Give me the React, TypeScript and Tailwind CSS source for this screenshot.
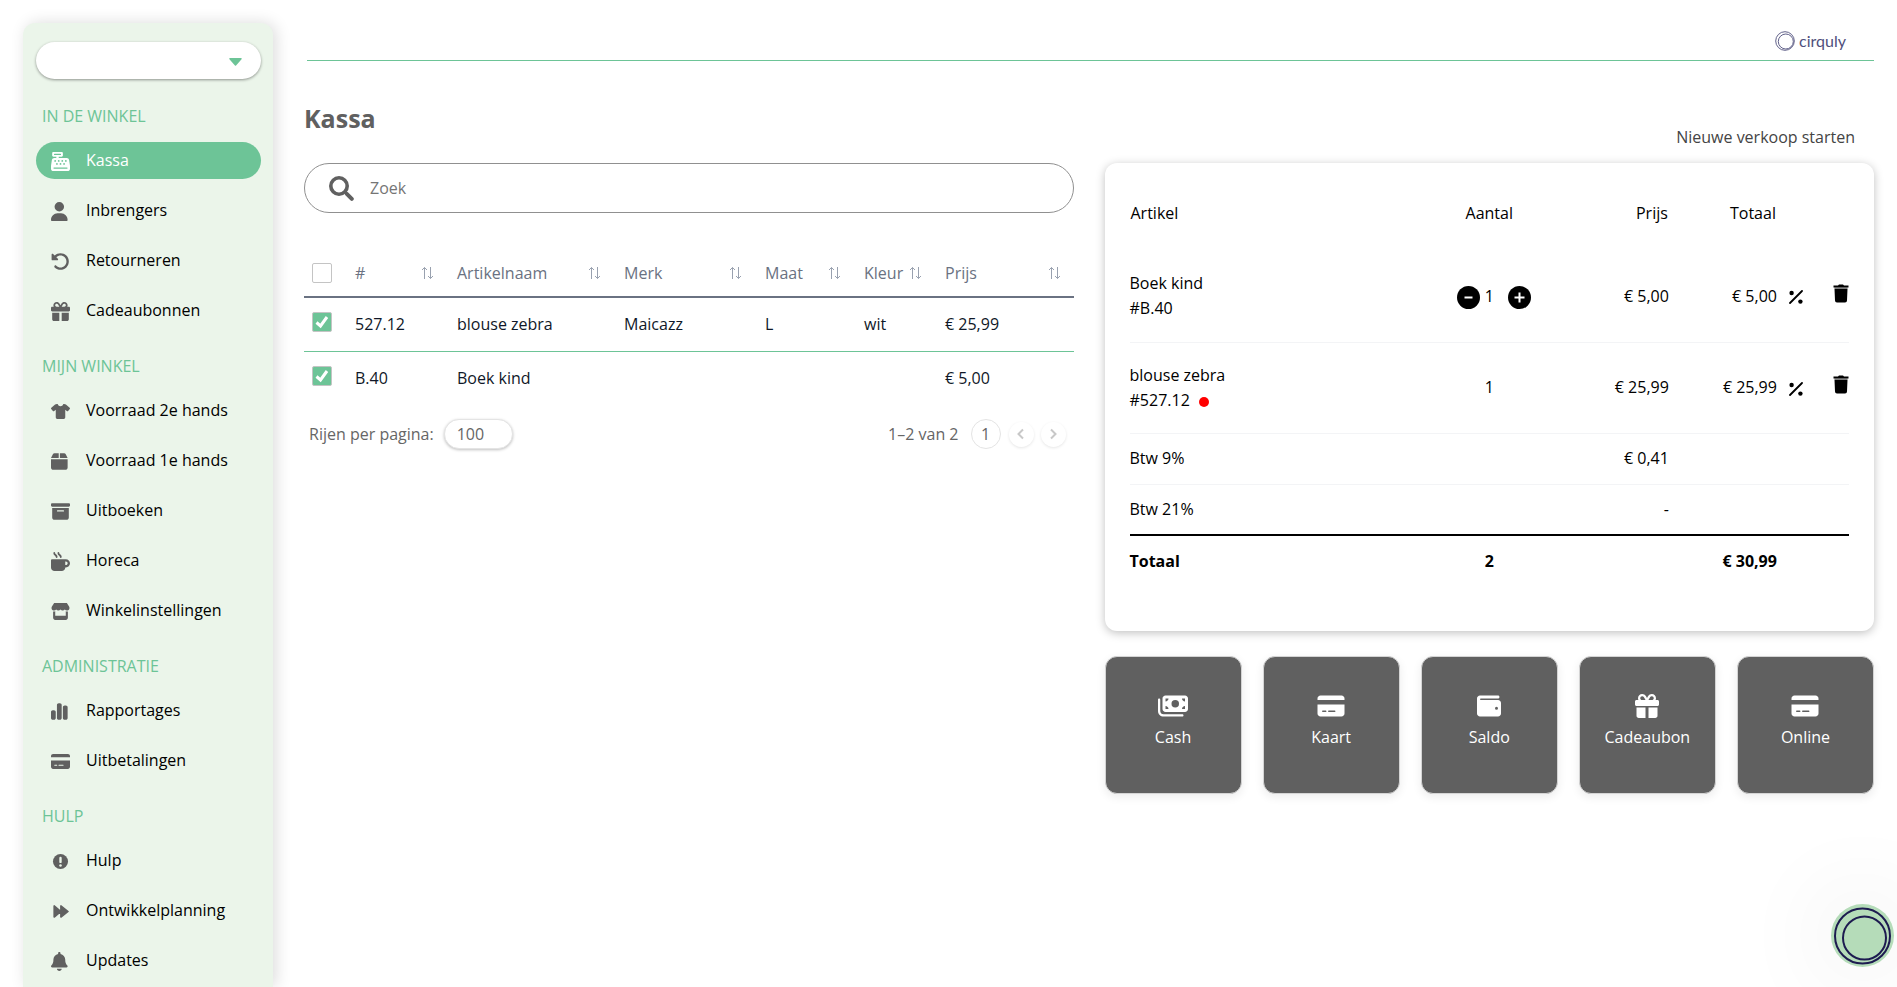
import { useState } from 'react';
import type { ReactNode } from 'react';
import type { IconType } from 'react-icons';
import {
    FaBell,
    FaBox,
    FaBoxArchive,
    FaCashRegister,
    FaChartSimple,
    FaCreditCard,
    FaGift,
    FaMoneyBills,
    FaMugHot,
    FaRotateLeft,
    FaShirt,
    FaStore,
    FaUser,
    FaWallet
} from 'react-icons/fa6';

interface IconProps {
    className?: string;
}

interface MenuItem {
    label: string;
    icon: IconType | ((props: IconProps) => ReactNode);
}

interface Article {
    id: string;
    name: string;
    brand: string;
    size: string;
    color: string;
    price: string;
}

interface CartLine {
    id: string;
    name: string;
    price: string;
    unique: boolean;
}

function NoticeIcon({ className }: IconProps) {
    return (
        <svg viewBox="0 0 24 24" className={className} aria-hidden="true">
            <circle cx="12" cy="12" r="9.5" fill="currentColor" />
            <path d="M12 7.500v5" stroke="#ebf5ea" strokeWidth="3" strokeLinecap="round" />
            <circle cx="12" cy="17" r="1.6" fill="#ebf5ea" />
        </svg>
    );
}

function ForwardIcon({ className }: IconProps) {
    return (
        <svg viewBox="0 0 24 24" className={className} aria-hidden="true">
            <path
                d="M4 5v14l8.500-7v7l9-7-9-7v7z"
                fill="currentColor"
                stroke="currentColor"
                strokeWidth="2"
                strokeLinejoin="round"
            />
        </svg>
    );
}

function SearchIcon({ className }: IconProps) {
    return (
        <svg viewBox="0 0 25 25" className={className} fill="none" stroke="currentColor" aria-hidden="true">
            <circle cx="10" cy="10" r="8.2" strokeWidth="3.6" />
            <path d="M16 16l2 2" strokeWidth="2.4" />
            <path d="M17.8 17.8l5 5" strokeWidth="4" strokeLinecap="round" />
        </svg>
    );
}

function SortIcon() {
    return (
        <svg viewBox="0 0 13 14" className="h-[14px] w-[13px] text-gray-400" fill="none" stroke="currentColor" aria-hidden="true">
            <path d="M3.5 13V1.5M1 4l2.5-2.5L6 4M9.5 1v11.5M7 10l2.500 2.500L12 10" />
        </svg>
    );
}

function PercentIcon() {
    return (
        <svg viewBox="0 0 14 14" className="h-[14px] w-[14px]" fill="currentColor" aria-hidden="true">
            <path d="M1 13L13 1" stroke="currentColor" strokeWidth="1.8" strokeLinecap="round" />
            <circle cx="2.600" cy="3" r="2.200" />
            <circle cx="11.400" cy="11.600" r="2.200" />
        </svg>
    );
}

function TrashIcon() {
    return (
        <svg viewBox="0 0 16 19" className="h-[19px] w-[16px]" fill="currentColor" aria-hidden="true">
            <path d="M.5 1.500h4.500L6 .5h4l1 1h4.500v2H.5z" />
            <path d="M1.500 3.500h13v1.200h-13z" opacity=".5" />
            <path d="M1.500 4.700h13L14 16.500a2 2 0 0 1-2 2H4a2 2 0 0 1-2-2z" />
        </svg>
    );
}

function RoundIcon({ plus = false }: { plus?: boolean }) {
    return (
        <svg viewBox="0 0 23 23" className="h-[23px] w-[23px]" aria-hidden="true">
            <circle cx="11.5" cy="11.5" r="11.5" />
            <path d={plus ? 'M6.500 11.500h10M11.500 6.500v10' : 'M7.500 11.500h8'} stroke="#fff" strokeWidth="2" />
        </svg>
    );
}

function ChevronIcon({ right = false }: { right?: boolean }) {
    return (
        <svg viewBox="0 0 10 12" className="h-[12px] w-[10px]" fill="none" stroke="currentColor" strokeWidth="2" aria-hidden="true">
            <path d={right ? 'M3 1.500L7.500 6 3 10.500' : 'M7 1.500L2.500 6 7 10.500'} />
        </svg>
    );
}

const menu: { title: string; items: MenuItem[] }[] = [
    {
        title: 'IN DE WINKEL',
        items: [
            { label: 'Kassa', icon: FaCashRegister },
            { label: 'Inbrengers', icon: FaUser },
            { label: 'Retourneren', icon: FaRotateLeft },
            { label: 'Cadeaubonnen', icon: FaGift }
        ]
    },
    {
        title: 'MIJN WINKEL',
        items: [
            { label: 'Voorraad 2e hands', icon: FaShirt },
            { label: 'Voorraad 1e hands', icon: FaBox },
            { label: 'Uitboeken', icon: FaBoxArchive },
            { label: 'Horeca', icon: FaMugHot },
            { label: 'Winkelinstellingen', icon: FaStore }
        ]
    },
    {
        title: 'ADMINISTRATIE',
        items: [
            { label: 'Rapportages', icon: FaChartSimple },
            { label: 'Uitbetalingen', icon: FaCreditCard }
        ]
    },
    {
        title: 'HULP',
        items: [
            { label: 'Hulp', icon: NoticeIcon },
            { label: 'Ontwikkelplanning', icon: ForwardIcon },
            { label: 'Updates', icon: FaBell }
        ]
    }
];

const articles: Article[] = [
    { id: '527.12', name: 'blouse zebra', brand: 'Maicazz', size: 'L', color: 'wit', price: '€ 25,99' },
    { id: 'B.40', name: 'Boek kind', brand: '', size: '', color: '', price: '€ 5,00' }
];

const cart: CartLine[] = [
    { id: 'B.40', name: 'Boek kind', price: '€ 5,00', unique: false },
    { id: '527.12', name: 'blouse zebra', price: '€ 25,99', unique: true }
];

const payments: { label: string; icon: IconType }[] = [
    { label: 'Cash', icon: FaMoneyBills },
    { label: 'Kaart', icon: FaCreditCard },
    { label: 'Saldo', icon: FaWallet },
    { label: 'Cadeaubon', icon: FaGift },
    { label: 'Online', icon: FaCreditCard }
];

const columns = ['#', 'Artikelnaam', 'Merk', 'Maat', 'Kleur', 'Prijs'];

interface CheckProps {
    label: string;
    checked: boolean;
    onChange: () => void;
}

function Check({ label, checked, onChange }: CheckProps) {
    return (
        <span className="relative block h-5 w-5">
            <input
                type="checkbox"
                aria-label={label}
                checked={checked}
                onChange={onChange}
                className="block h-5 w-5 appearance-none rounded-xs border border-[#c4c4c4] bg-white checked:bg-[#6dc497]"
            />
            {checked && (
                <svg viewBox="0 0 20 20" className="pointer-events-none absolute inset-0 h-5 w-5" fill="none" stroke="#fff" strokeWidth="3" aria-hidden="true">
                    <path d="M4.500 10.500l4 3.500 6.500-9" />
                </svg>
            )}
        </span>
    );
}

function Sidebar() {
    return (
        <aside className="mt-[23px] ml-[23px] w-[250px] shrink-0 rounded-t-xl bg-[#ebf5ea] px-[13px] pt-[19px] shadow-[3px_0_16px_rgba(0,0,0,0.14)]">
            <div className="relative mb-[13px]">
                <select aria-label="Winkel" className="block h-[37px] w-[225px] appearance-none rounded-full bg-white px-4 shadow-[0_1px_3px_rgba(0,0,0,0.4)]">
                    <option value=""></option>
                </select>
                <svg viewBox="0 0 13 8" className="pointer-events-none absolute top-4 right-[18px] h-2 w-[13px] text-[#6dc497]" aria-hidden="true">
                    <path d="M1 .8h11L6.500 7z" fill="currentColor" stroke="currentColor" strokeWidth="1.500" strokeLinejoin="round" />
                </svg>
            </div>
            <nav>
                {menu.map(group => (
                    <section key={group.title}>
                        <h2 className="flex h-[50px] items-center pb-0.5 pl-1.5 text-[#6dc497]">{group.title}</h2>
                        {group.items.map(({ label, icon: Icon }) => {
                            const active = label === 'Kassa';
                            return (
                                <a
                                    key={label}
                                    href="#"
                                    className={`mb-[13px] flex h-[37px] w-[225px] items-center gap-4 rounded-full pb-px pl-[15px] ${active ? 'bg-[#6dc497] text-white' : 'text-black'}`}
                                >
                                    <Icon
                                        preserveAspectRatio="xMinYMid"
                                        className={`mt-[3px] h-[19px] w-[19px] shrink-0 ${active ? 'text-white' : 'text-[#606060]'}`}
                                    />
                                    {label}
                                </a>
                            );
                        })}
                    </section>
                ))}
            </nav>
        </aside>
    );
}

function ArticleSearch() {
    const [selected, setSelected] = useState<string[]>(articles.map(a => a.id));

    const toggle = (id: string) => {
        setSelected(selected.includes(id) ? selected.filter(s => s !== id) : [...selected, id]);
    };

    return (
        <section>
            <h1 className="flex h-[102px] items-center pt-3.5 text-[25px] font-bold text-[#606060]">Kassa</h1>
            <label className="flex h-[50px] items-center gap-4 rounded-full border border-[#909090] pl-6 text-[#606060]">
                <SearchIcon className="h-[25px] w-[25px] shrink-0" />
                <input type="search" placeholder="Zoek" aria-label="Zoek" className="h-full min-w-0 flex-1 outline-none placeholder:text-[#757575]" />
            </label>

            <table className="mt-[34px] w-full table-fixed border-collapse text-left">
                <colgroup>
                    <col className="w-[39px]" />
                    <col className="w-[102px]" />
                    <col className="w-[167px]" />
                    <col className="w-[141px]" />
                    <col className="w-[99px]" />
                    <col className="w-[81px]" />
                    <col className="w-[141px]" />
                </colgroup>
                <thead>
                    <tr className="h-[50px] border-b-2 border-gray-500 text-gray-500">
                        <th className="pt-0.5 pl-2">
                            <Check label="Alles selecteren" checked={false} onChange={() => setSelected([])} />
                        </th>
                        {columns.map(column => (
                            <th key={column} className="pt-0.5 pr-[11px] pl-3 font-normal last:pr-[13px]">
                                <button type="button" className="flex w-full items-center justify-between">
                                    {column}
                                    <SortIcon />
                                </button>
                            </th>
                        ))}
                    </tr>
                </thead>
                <tbody className="text-gray-900">
                    {articles.map(article => (
                        <tr key={article.id} className="h-[54px] border-b border-[#6dc497] last:border-b-0">
                            <td className="pb-1 pl-2">
                                <Check label={article.name} checked={selected.includes(article.id)} onChange={() => toggle(article.id)} />
                            </td>
                            <td className="pl-3">{article.id}</td>
                            <td className="pl-3">{article.name}</td>
                            <td className="pl-3">{article.brand}</td>
                            <td className="pl-3">{article.size}</td>
                            <td className="pl-3">{article.color}</td>
                            <td className="pl-3">{article.price}</td>
                        </tr>
                    ))}
                </tbody>
            </table>

            <div className="mt-[14px] flex items-center justify-between pr-2 pl-[5px] text-[#666]">
                <label className="flex items-center gap-2.5">
                    Rijen per pagina:
                    <select className="h-[30px] w-[69px] appearance-none rounded-full border border-[#e4e4e4] bg-white pl-3 shadow-[0_1px_3px_rgba(0,0,0,0.25)]">
                        <option>100</option>
                    </select>
                </label>
                <div className="flex items-center">
                    <span className="mr-3">1–2 van 2</span>
                    <button type="button" className="mr-2 h-[30px] w-[30px] rounded-full border border-[#e4e4e4]">1</button>
                    <button type="button" aria-label="Vorige" className="mr-[7px] flex h-[25px] w-[25px] items-center justify-center rounded-full text-[#c8c8c8] shadow-[0_1px_3px_rgba(0,0,0,0.1)]">
                        <ChevronIcon />
                    </button>
                    <button type="button" aria-label="Volgende" className="flex h-[25px] w-[25px] items-center justify-center rounded-full text-[#c8c8c8] shadow-[0_1px_3px_rgba(0,0,0,0.1)]">
                        <ChevronIcon right />
                    </button>
                </div>
            </div>
        </section>
    );
}

function Cart() {
    return (
        <div className="rounded-xl bg-white px-[25px] pt-[25px] pb-[45px] shadow-[0_2px_10px_rgba(0,0,0,0.25)]">
            <table className="w-full table-fixed border-collapse text-left leading-[25px] text-black">
                <colgroup>
                    <col className="w-[300px]" />
                    <col className="w-[119px]" />
                    <col className="w-[120px]" />
                    <col className="w-[108px]" />
                    <col className="w-[34px]" />
                    <col className="w-[38px]" />
                </colgroup>
                <thead>
                    <tr>
                        <th className="px-px pt-[13px] pb-[25px] font-normal">Artikel</th>
                        <th className="px-px pt-[13px] pb-[25px] text-center font-normal">Aantal</th>
                        <th className="px-px pt-[13px] pb-[25px] text-right font-normal">Prijs</th>
                        <th className="px-px pt-[13px] pb-[25px] text-right font-normal">Totaal</th>
                        <td />
                        <td />
                    </tr>
                </thead>
                <tbody>
                    {cart.map(line => (
                        <tr key={line.id} className="h-[91px] border-b border-gray-100">
                            <td>
                                {line.name}
                                <span className="flex items-center gap-[9px]">
                                    #{line.id}
                                    {line.unique && <i className="mt-1 h-2.5 w-2.5 rounded-full bg-[#f00]" />}
                                </span>
                            </td>
                            <td>
                                <div className="grid grid-cols-[1fr_auto_1fr] items-center">
                                    {line.unique ? <span /> : (
                                        <button type="button" aria-label="Minder" className="mr-[5px] justify-self-end pt-0.5">
                                            <RoundIcon />
                                        </button>
                                    )}
                                    <span>1</span>
                                    {line.unique ? <span /> : (
                                        <button type="button" aria-label="Meer" className="ml-[14px] justify-self-start pt-0.5">
                                            <RoundIcon plus />
                                        </button>
                                    )}
                                </div>
                            </td>
                            <td className="text-right">{line.price}</td>
                            <td className="text-right">{line.price}</td>
                            <td className="pl-3">
                                <button type="button" aria-label="Korting" className="block pt-0.5">
                                    <PercentIcon />
                                </button>
                            </td>
                            <td>
                                <button type="button" aria-label="Verwijderen" className="ml-auto block pb-1.5">
                                    <TrashIcon />
                                </button>
                            </td>
                        </tr>
                    ))}
                    <tr className="h-[51px] border-b border-gray-100">
                        <td>Btw 9%</td>
                        <td />
                        <td className="text-right">€ 0,41</td>
                        <td colSpan={3} />
                    </tr>
                    <tr className="h-[51px]">
                        <td>Btw 21%</td>
                        <td />
                        <td className="text-right">-</td>
                        <td colSpan={3} />
                    </tr>
                </tbody>
                <tfoot>
                    <tr className="h-[51px] border-t-2 border-black font-bold">
                        <td>Totaal</td>
                        <td className="text-center">2</td>
                        <td />
                        <td className="text-right">€ 30,99</td>
                        <td colSpan={2} />
                    </tr>
                </tfoot>
            </table>
        </div>
    );
}

export default function App() {
    return (
        <div className="flex h-screen overflow-hidden bg-white font-['Open_Sans',sans-serif] text-base">
            <Sidebar />
            <main className="min-w-0 flex-1 pr-[23px] pl-[31px]">
                <header className="ml-[3px] flex h-[61px] items-end justify-end border-b border-[#6dc497] pr-7 pb-[9px] text-[#4f4f7c]">
                    <a href="#" className="flex items-center gap-1 font-['Lato',sans-serif] text-base leading-5">
                        <svg viewBox="0 0 20 20" className="h-5 w-5" fill="none" stroke="currentColor" aria-hidden="true">
                            <circle cx="10" cy="10" r="9.300" strokeWidth=".9" />
                            <circle cx="10.800" cy="10.500" r="7.500" strokeWidth=".9" />
                        </svg>
                        cirquly
                    </a>
                </header>
                <div className="grid grid-cols-2 gap-x-[31px]">
                    <ArticleSearch />
                    <section>
                        <div className="flex h-[102px] items-end justify-end pr-[19px] pb-[14px]">
                            <button type="button" className="text-[#444]">Nieuwe verkoop starten</button>
                        </div>
                        <Cart />
                        <div className="mt-[25px] grid grid-cols-5 gap-[21px]">
                            {payments.map(({ label, icon: Icon }) => (
                                <button
                                    key={label}
                                    type="button"
                                    className="flex h-[138px] flex-col items-center gap-[7px] rounded-xl border border-[#d4d4d4] bg-[#606060] pt-[37px] text-white shadow-[0_3px_10px_rgba(0,0,0,0.08)]"
                                >
                                    <Icon className="h-6 w-[30px]" />
                                    {label}
                                </button>
                            ))}
                        </div>
                    </section>
                </div>
            </main>

            <button
                type="button"
                aria-label="Chat openen"
                className="fixed right-[3px] bottom-5 h-[63px] w-[63px] rounded-full bg-[#b5dcb9] text-[#1d1b50] shadow-[0_0_100px_rgba(0,0,0,0.12)]"
            >
                <svg viewBox="0 0 63 63" className="h-full w-full" fill="none" stroke="currentColor" strokeWidth="2" aria-hidden="true">
                    <circle cx="31.500" cy="32" r="27.500" />
                    <circle cx="33.500" cy="34" r="21.500" />
                </svg>
            </button>
        </div>
    );
}
